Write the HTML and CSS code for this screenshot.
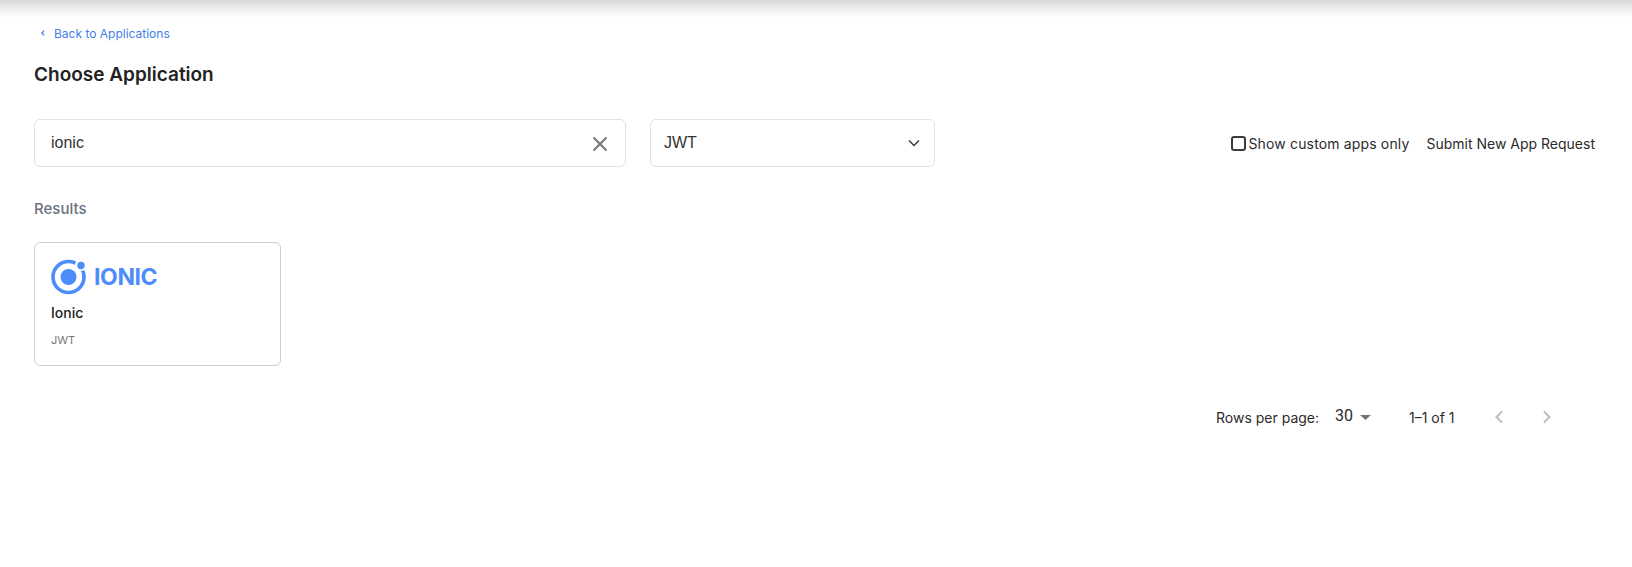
FILE: index.html
```html
<!DOCTYPE html>
<html lang="en">
<head>
<meta charset="utf-8">
<title>Choose Application</title>
<link rel="stylesheet" href="styles.css">
</head>
<body>
<div class="top-shadow"></div>
<main class="page">
  <a class="back" href="#">
    <svg class="back-icon" viewBox="0 0 8 10" width="8" height="10"><path d="M5.2 2.6 2.8 5l2.4 2.4" fill="none" stroke="#3f80e8" stroke-width="1.2"/></svg>
    <span>Back to Applications</span>
  </a>
  <h1 class="title">Choose Application</h1>
  <div class="filters">
    <div class="field search">
      <span class="value">ionic</span>
      <svg class="clear" viewBox="0 0 16 16" width="16" height="16"><path d="M1.5 1.5 14.500 14.500M14.500 1.500 1.500 14.500" fill="none" stroke="#757575" stroke-width="2"/></svg>
    </div>
    <div class="field select">
      <span class="value">JWT</span>
      <svg viewBox="0 0 12 8" width="12" height="8"><path d="M1 1.500 6 6.500 11 1.500" fill="none" stroke="#3a3a3a" stroke-width="1.500"/></svg>
    </div>
    <div class="actions">
      <label class="check"><span class="box"></span><span class="check-text">Show custom apps only</span></label>
      <a class="submit" href="#">Submit New App Request</a>
    </div>
  </div>
  <h2 class="results">Results</h2>
  <article class="card">
    <div class="logo">
      <svg viewBox="0 0 36 36" width="36" height="36">
        <circle cx="17.500" cy="18" r="15.500" fill="none" stroke="#4d8dfb" stroke-width="3.600"/>
        <circle cx="17.500" cy="18" r="8" fill="#4d8dfb"/>
        <circle cx="30" cy="6" r="6" fill="#fff"/>
        <circle cx="30" cy="6.500" r="3.700" fill="#4d8dfb"/>
      </svg>
      <span class="logo-text">IONIC</span>
    </div>
    <div class="app-name">Ionic</div>
    <div class="app-type">JWT</div>
  </article>
  <div class="pager">
    <span class="rows-label">Rows per page:</span>
    <span class="rows-value">30</span>
    <svg class="caret" viewBox="0 0 11 5" width="11" height="5"><path d="M0 0h11L5.500 5z" fill="#757575"/></svg>
    <span class="range">1–1 of 1</span>
    <svg class="nav prev" viewBox="0 0 10 14" width="10" height="14"><path d="M8 1.500 2.500 7 8 12.500" fill="none" stroke="#bdbdbd" stroke-width="2"/></svg>
    <svg class="nav next" viewBox="0 0 10 14" width="10" height="14"><path d="M2 1.500 7.500 7 2 12.500" fill="none" stroke="#bdbdbd" stroke-width="2"/></svg>
  </div>
</main>
</body>
</html>
```
FILE: styles.css
```css
* { box-sizing: border-box; }
html, body { margin: 0; background: #fff; }
body {
  font-family: "Inter", "Liberation Sans", sans-serif;
  color: #222;
  height: 567px;
  overflow: hidden;
}
.top-shadow {
  height: 18px;
  background: linear-gradient(#d9d9d9, #f0f0f0 55%, #fff);
}
.page { padding: 0 37px 0 34px; }
.back {
  display: flex;
  align-items: center;
  gap: 7px;
  height: 30px;
  padding-left: 5px;
  color: #3f80e8;
  font-size: 12px;
  text-decoration: none;
}
.title {
  margin: 13px 0 0;
  font-size: 19px;
  line-height: 28px;
  font-weight: 600;
  color: #222;
}
.filters {
  display: flex;
  align-items: center;
  margin-top: 30px;
}
.field {
  display: flex;
  align-items: center;
  justify-content: space-between;
  height: 48px;
  background: #fff;
  border: 1px solid #e2e2e2;
  border-radius: 6px;
  font-family: "Liberation Sans", sans-serif;
  font-size: 16px;
  color: #333;
}
.search { width: 592px; padding: 0 17px 0 16px; }
.select { width: 285px; margin-left: 24px; padding: 0 14px 0 13px; }
.clear { margin-top: 1px; }
.actions {
  display: flex;
  align-items: center;
  margin-left: auto;
  font-size: 14px;
  color: #2b2b2b;
}
.check { display: flex; align-items: center; gap: 2px; }
.box {
  width: 15px;
  height: 15px;
  border: 2px solid #3c3c3c;
  border-radius: 3px;
}
.check-text { letter-spacing: .15px; }
.submit { margin-left: 17px; color: inherit; text-decoration: none; }
.results {
  margin: 31px 0 0;
  font-size: 15px;
  line-height: 22px;
  font-weight: 500;
  color: #6b7280;
}
.card {
  width: 247px;
  height: 124px;
  margin-top: 22px;
  padding: 16px;
  border: 1px solid #cfcfcf;
  border-radius: 6px;
}
.logo { display: flex; align-items: center; gap: 7px; height: 36px; }
.logo-text {
  font-family: "Inter", sans-serif;
  font-size: 23px;
  line-height: 36px;
  font-weight: 700;
  letter-spacing: -.4px;
  color: #4d8dfb;
}
.app-name { margin-top: 9px; font-size: 14px; line-height: 18px; font-weight: 500; color: #222; }
.app-type { margin-top: 11px; font-size: 11px; line-height: 14px; color: #777; }
.pager {
  display: flex;
  align-items: center;
  height: 24px;
  margin-top: 39px;
  padding-left: 1182px;
  font-size: 14px;
  color: #2b2b2b;
}
.rows-value {
  margin-left: 16px;
  font-family: "Roboto", sans-serif;
  font-size: 16px;
  position: relative;
  top: -2px;
}
.caret { margin-left: 7px; }
.range { margin-left: 38px; }
.nav { flex: none; }
.prev { margin-left: 39px; }
.next { margin-left: 38px; }
```
